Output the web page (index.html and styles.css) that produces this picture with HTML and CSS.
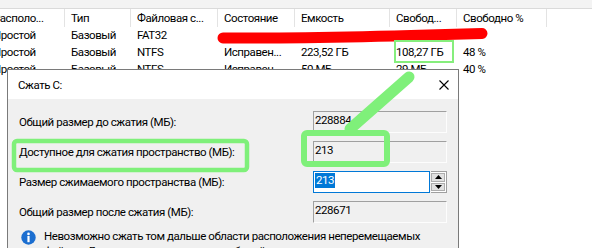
FILE: index.html
```html
<!DOCTYPE html>
<html lang="ru">
<head>
    <meta charset="UTF-8">
    <title>Сжать C:</title>
    <link rel="stylesheet" href="styles.css">
</head>
<body>
<div class="screen">
    <div class="toolbar"></div>

    <div class="volumes">
        <div class="vrow vhead">
            <span class="c1">Располо...</span>
            <span class="c2">Тип</span>
            <span class="c3">Файловая с...</span>
            <span class="c4">Состояние</span>
            <span class="c5">Емкость</span>
            <span class="c6">Свобод...</span>
            <span class="c7">Свободно %</span>
            <span class="c8"></span>
        </div>
        <div class="vrow">
            <span class="c1">Простой</span>
            <span class="c2">Базовый</span>
            <span class="c3">FAT32</span>
            <span class="c4"></span>
            <span class="c5"></span>
            <span class="c6"></span>
            <span class="c7"></span>
        </div>
        <div class="vrow">
            <span class="c1">Простой</span>
            <span class="c2">Базовый</span>
            <span class="c3">NTFS</span>
            <span class="c4">Исправен...</span>
            <span class="c5">223,52 ГБ</span>
            <span class="c6">108,27 ГБ</span>
            <span class="c7">48 %</span>
        </div>
        <div class="vrow">
            <span class="c1">Простой</span>
            <span class="c2">Базовый</span>
            <span class="c3">NTFS</span>
            <span class="c4">Исправен...</span>
            <span class="c5">50 МБ</span>
            <span class="c6">29 МБ</span>
            <span class="c7">40 %</span>
        </div>
    </div>

    <div class="dialog">
        <div class="dialog-title">
            <span>Сжать C:</span>
            <svg class="close" width="10" height="10" viewBox="0 0 10 10">
                <path d="M0.5 0.5 L9.5 9.5 M9.5 0.5 L0.5 9.5" stroke="#000" stroke-width="1.1" fill="none"/>
            </svg>
        </div>
        <div class="dialog-body">
            <div class="field-row">
                <label>Общий размер до сжатия (МБ):</label>
                <div class="field">228884</div>
            </div>
            <div class="field-row">
                <label>Доступное для сжатия пространство (МБ):</label>
                <div class="field">213</div>
            </div>
            <div class="field-row">
                <label>Размер сжимаемого пространства (МБ):</label>
                <div class="spin">
                    <div class="spin-edit"><span class="selected">213</span></div>
                    <div class="spin-buttons">
                        <div class="spin-btn"><svg width="7" height="4" viewBox="0 0 7 4"><path d="M0 4 L3.5 0 L7 4 Z" fill="#000"/></svg></div>
                        <div class="spin-btn"><svg width="7" height="4" viewBox="0 0 7 4"><path d="M0 0 L3.5 4 L7 0 Z" fill="#000"/></svg></div>
                    </div>
                </div>
            </div>
            <div class="field-row">
                <label>Общий размер после сжатия (МБ):</label>
                <div class="field">228671</div>
            </div>
            <div class="info">
                <svg class="info-icon" width="15" height="15" viewBox="0 0 15 15">
                    <circle cx="7.5" cy="7.5" r="7.2" fill="#1b6ed0"/>
                    <circle cx="7.5" cy="3.9" r="1.3" fill="#fff"/>
                    <rect x="6.4" y="6" width="2.2" height="6.2" fill="#fff"/>
                </svg>
                <p>Невозможно сжать том дальше области расположения неперемещаемых файлов. Дополнительные сведения об этой операции см. после ее завершения в журнале событий «Приложения».</p>
            </div>
        </div>
    </div>

    <svg class="marks" width="592" height="248" viewBox="0 0 592 248">
        <path d="M223 38 C 290 38.5, 400 36, 482 33.5" stroke="#ff0000" stroke-width="11" stroke-linecap="round" fill="none"/>
        <rect x="395" y="41" width="58" height="21" fill="none" stroke="#86ee7c" stroke-width="2"/>
        <path d="M409 77 L350 129" stroke="#7ff07a" stroke-width="11" stroke-linecap="round" fill="none"/>
        <rect x="14" y="141" width="233" height="29" rx="3" fill="none" stroke="#7ff07a" stroke-width="4.5"/>
        <rect x="304" y="133" width="83" height="31" rx="3" fill="none" stroke="#7ff07a" stroke-width="6"/>
    </svg>
</div>
</body>
</html>
```

FILE: styles.css
```css
/* Page */
body {
    margin: 0;
    font-family: Roboto, "Noto Sans", sans-serif;
    font-size: 11.5px;
    letter-spacing: -0.43px;
    color: #000;
    background-color: #fff;
    overflow: hidden;
}

.screen {
    position: relative;
    width: 592px;
    height: 248px;
    overflow: hidden;
}

.toolbar {
    height: 8px;
    background-color: #f3f3f3;
    border-bottom: 1px solid #dadada;
}

/* Volume list */
.volumes {
    margin-left: -13px;
}

.vrow {
    display: flex;
    height: 17px;
    line-height: 17px;
    white-space: nowrap;
}

.vrow span {
    flex: none;
    box-sizing: border-box;
    padding-left: 6px;
    overflow: hidden;
}

.vhead {
    height: 18px;
    line-height: 18px;
}

.vhead span {
    height: 18px;
    border-right: 1px solid #e3e3e3;
}

.c1 { width: 78px; }
.c2 { width: 66px; }
.c3 { width: 87px; }
.c4 { width: 77px; }
.c5 { width: 95px; }
.c6 { width: 67px; }
.c7 { width: 90px; }
.c8 { width: 60px; }

/* Shrink dialog */
.dialog {
    position: absolute;
    left: 7px;
    top: 69px;
    width: 450px;
    height: 200px;
    border: 1px solid #7a7a7a;
    background-color: #f0f0f0;
    z-index: 1;
}

.dialog-title {
    display: flex;
    align-items: center;
    justify-content: space-between;
    height: 29px;
    padding: 0 9px 0 10px;
    background-color: #fff;
}

.dialog-title span {
    margin-top: 1px;
}

.close {
    display: block;
    margin-top: 1px;
}

.dialog-body {
    display: flex;
    flex-direction: column;
    gap: 8px;
    padding: 12px 10px 0 11px;
}

.field-row {
    display: flex;
    align-items: center;
    height: 22px;
}

.field-row label {
    width: 294px;
    flex: none;
}

.field {
    box-sizing: border-box;
    width: 134px;
    height: 22px;
    padding: 0 1px;
    line-height: 16px;
    border: 1px solid #fdfdfd;
    border-top-color: #a0a0a0;
    border-left-color: #a0a0a0;
}

.spin {
    display: flex;
    gap: 1px;
    width: 134px;
    height: 22px;
}

.spin-edit {
    box-sizing: border-box;
    flex: 1;
    padding: 1px 1px 0;
    line-height: 15px;
    background-color: #fff;
    border: 1px solid #0078d7;
}

.selected {
    display: inline-block;
    padding: 0 1px;
    background-color: #0078d7;
    color: #fff;
}

.spin-buttons {
    display: flex;
    flex-direction: column;
    gap: 1px;
    width: 16px;
    padding: 1px 0;
    box-sizing: border-box;
    border: 1px solid #a0a0a0;
    border-left: none;
    background-color: #fff;
}

.spin-btn {
    flex: 1;
    display: flex;
    align-items: center;
    justify-content: center;
    background-color: #e1e1e1;
    border: 1px solid #adadad;
    margin-right: 1px;
}

.info {
    display: flex;
    align-items: flex-start;
    gap: 8px;
    margin-top: -1px;
    padding-left: 2px;
}

.info-icon {
    flex: none;
}

.info p {
    margin: 0;
    width: 400px;
    line-height: 15px;
    margin-top: -1px;
}

/* Red / green marker annotations */
.marks {
    position: absolute;
    left: 0;
    top: 0;
    z-index: 2;
    pointer-events: none;
}
```
